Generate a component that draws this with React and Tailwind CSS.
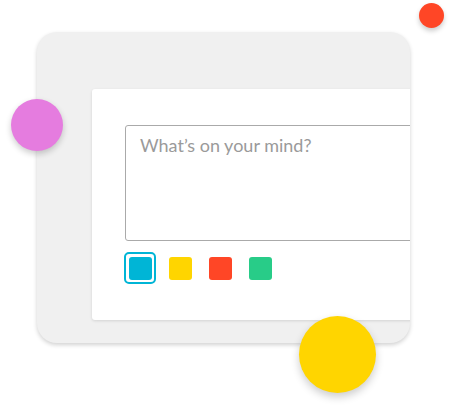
import { useState } from 'react';

const swatches = [
  { id: 'cyan', color: 'bg-[#00b5d6]', ring: 'border-[#00b5d6]' },
  { id: 'yellow', color: 'bg-[#ffd500]', ring: 'border-[#ffd500]' },
  { id: 'red', color: 'bg-[#ff4626]', ring: 'border-[#ff4626]' },
  { id: 'green', color: 'bg-[#28cc88]', ring: 'border-[#28cc88]' },
];

export default function App() {
  const [selected, setSelected] = useState('cyan');

  return (
    <div className="relative w-[456px] h-[410px] bg-white overflow-hidden pt-[32px] pl-[37px] font-['Lato',sans-serif]">
      {/* Grey backdrop card */}
      <div className="w-[373px] h-[311px] rounded-[20px] bg-[#f0f0f0] overflow-hidden pt-[57px] pl-[55px] shadow-[0_2px_4px_rgba(0,0,0,0.18)]">
        {/* Composer card */}
        <div className="w-[360px] h-[231px] rounded-[3px] bg-white pt-[36px] pl-[33px] shadow-[0_1px_3px_rgba(0,0,0,0.12)]">
          <textarea
            placeholder="What’s on your mind?"
            className="block w-[320px] h-[116px] resize-none rounded-[3px] border border-[#aaaaaa] pl-[14px] pr-[14px] pt-[7px] text-[18px] leading-[24px] text-[#555] placeholder:text-[#9a9a9a] outline-none"
          />
          <div className="flex items-center gap-[8px] mt-[11px] -ml-[1px]">
            {swatches.map((s) => (
              <button
                key={s.id}
                onClick={() => setSelected(s.id)}
                className={`w-[32px] h-[32px] rounded-[5px] border-2 flex items-center justify-center ${
                  selected === s.id ? s.ring : 'border-transparent'
                }`}
              >
                <span className={`block w-[23px] h-[23px] rounded-[3px] ${s.color}`} />
              </button>
            ))}
          </div>
        </div>
      </div>

      {/* Decorative dots */}
      <div className="absolute left-[419px] top-[3px] w-[25px] h-[25px] rounded-full bg-[#ff4626] shadow-[0_3px_5px_rgba(0,0,0,0.2)]" />
      <div className="absolute left-[11px] top-[99px] w-[52px] h-[52px] rounded-full bg-[#e57cdf] shadow-[0_3px_6px_rgba(0,0,0,0.2)]" />
      <div className="absolute left-[299px] top-[316px] w-[77px] h-[77px] rounded-full bg-[#ffd500] shadow-[0_4px_8px_rgba(0,0,0,0.2)]" />
    </div>
  );
}
